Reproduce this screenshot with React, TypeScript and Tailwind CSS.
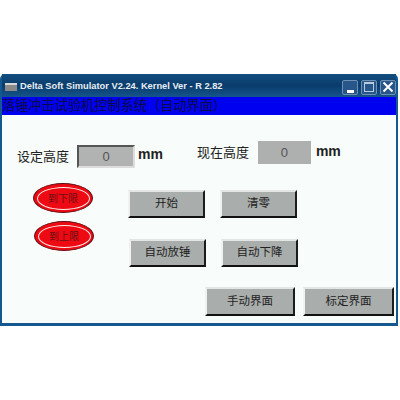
const cjk = "font-['Liberation_Sans','Noto_Sans_CJK_SC',sans-serif]";

function Btn({ label, className }: { label: string; className: string }) {
  return (
    <button
      className={`${cjk} flex items-center justify-center bg-[#a9adab] text-[11.5px] text-[#222] border-2 border-t-[#e4e6e6] border-l-[#f0f2f2] border-r-[#1c1c1c] border-b-[#111] ${className}`}
    >
      {label}
    </button>
  );
}

function Lamp({ label }: { label: string }) {
  return (
    <div className="relative flex h-[30px] w-[60px] items-center justify-center rounded-[50%] bg-[#ee0a12] border-[1.5px] border-[#5a1014]">
      <div className="absolute inset-[2.5px] rounded-[50%] border-[1.5px] border-[#fbeeee]" />
      <span className={`${cjk} text-[10px] text-[#6a0f16]`}>{label}</span>
    </div>
  );
}

function WinBtn({ children }: { children: React.ReactNode }) {
  return (
    <div className="flex h-[15px] w-[16px] items-center justify-center rounded-[2px] border border-[#6f90b2] bg-[#27568a]">
      {children}
    </div>
  );
}

export default function App() {
  return (
    <div className="h-[400px] w-[400px] overflow-hidden bg-white pt-[74px]">
      <div className="flex h-[252px] w-[398px] flex-col rounded-t-[5px] border-x-2 border-b-[3px] border-[#14588f] bg-[#f8fcfa]">
        {/* Title bar */}
        <div className="flex h-[23px] items-center justify-between bg-gradient-to-b from-[#134f80] via-[#0a3c6c] to-[#14558c] pl-[3px] pt-[3px]">
          <div className="flex items-center gap-[3px]">
            <div className="h-[8px] w-[12px] border-t-2 border-[#d8d8d8] bg-[#8a8a8a]" />
            <span className="font-['Liberation_Sans',sans-serif] text-[9.3px] font-bold text-[#e8eef2] whitespace-nowrap">
              Delta Soft Simulator V2.24. Kernel Ver - R 2.82
            </span>
          </div>
          <div className="flex gap-[3px]">
            <WinBtn>
              <div className="mt-[8px] h-[3px] w-[7px] bg-white" />
            </WinBtn>
            <WinBtn>
              <div className="h-[10px] w-[10px] border border-t-2 border-[#b8cadc]" />
            </WinBtn>
            <WinBtn>
              <svg viewBox="0 0 12 12" className="h-[12px] w-[12px]">
                <path d="M1.5 1.5 L10.5 10.5 M10.5 1.5 L1.5 10.5" stroke="#fff" strokeWidth="2" />
              </svg>
            </WinBtn>
          </div>
        </div>

        {/* Caption */}
        <div className={`${cjk} h-[18px] bg-[#0000f0] text-[13.2px] leading-[18px] text-[#0a0a4a] whitespace-nowrap`}>
          落锤冲击试验机控制系统（自动界面）
        </div>

        {/* Height row */}
        <div className="mt-[26px] flex items-start pl-[15px]">
          <div className="mt-[4px] flex items-center">
            <span className={`${cjk} w-[60px] text-[13px] text-[#222]`}>设定高度</span>
            <div className="flex h-[23px] w-[58px] items-center justify-center border-2 border-t-[#555] border-l-[#555] border-r-[#ddd] border-b-[#ddd] bg-[#b0b3b2] text-[13px] text-[#555] font-['Liberation_Sans',sans-serif]">
              0
            </div>
            <span className="ml-[3px] -mt-[4px] font-['Liberation_Sans',sans-serif] text-[14px] font-bold text-[#222]">mm</span>
          </div>
          <div className="ml-[34px] flex items-center">
            <span className={`${cjk} w-[61px] text-[13px] text-[#222]`}>现在高度</span>
            <div className="flex h-[23px] w-[53px] items-center justify-center bg-[#adb0af] text-[13px] text-[#555] font-['Liberation_Sans',sans-serif]">
              0
            </div>
            <span className="ml-[5px] -mt-[3px] font-['Liberation_Sans',sans-serif] text-[14px] font-bold text-[#222]">mm</span>
          </div>
        </div>

        {/* Lamps and buttons */}
        <div className="mt-[15px] flex pl-[31px]">
          <div className="flex flex-col gap-[8px]">
            <Lamp label="到下限" />
            <div className="ml-[1px]">
              <Lamp label="到上限" />
            </div>
          </div>
          <div className="ml-[34px] mt-[7px] flex flex-col gap-[21px]">
            <div className="flex gap-[15px]">
              <Btn label="开始" className="h-[28px] w-[77px]" />
              <Btn label="清零" className="h-[28px] w-[77px]" />
            </div>
            <div className="ml-[1px] flex gap-[15px]">
              <Btn label="自动放锤" className="h-[28px] w-[77px]" />
              <Btn label="自动下降" className="h-[28px] w-[77px]" />
            </div>
          </div>
        </div>

        {/* Bottom buttons */}
        <div className="mt-[20px] flex justify-end gap-[8px] pr-[2px]">
          <Btn label="手动界面" className="h-[29px] w-[90px]" />
          <Btn label="标定界面" className="h-[29px] w-[91px]" />
        </div>
      </div>
    </div>
  );
}
